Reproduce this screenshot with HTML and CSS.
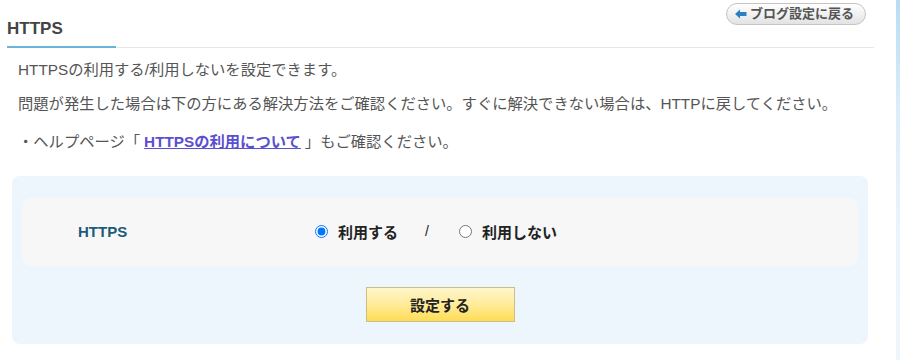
FILE: index.html
```html
<!DOCTYPE html>
<html lang="ja">
<head>
<meta charset="utf-8">
<title>HTTPS</title>
<link rel="stylesheet" href="styles.css">
</head>
<body>
<div class="page">
  <div class="main">
    <div class="header">
      <h2 class="title">HTTPS</h2>
      <a class="back-btn" href="#">
        <svg class="back-icon" width="12" height="10" viewBox="0 0 12 10"><path d="M0 5 L5 0.5 L5 3 L11.5 3 L11.5 7 L5 7 L5 9.5 Z" fill="#2a80c4"/></svg>
        <span>ブログ設定に戻る</span>
      </a>
    </div>
    <p class="intro first">HTTPSの利用する/利用しないを設定できます。</p>
    <p class="intro">問題が発生した場合は下の方にある解決方法をご確認ください。すぐに解決できない場合は、HTTPに戻してください。</p>
    <p class="intro help">・ヘルプページ「<a class="help-link" href="#">HTTPSの利用について</a>」もご確認ください。</p>
    <form class="settings-box">
      <div class="setting-row">
        <div class="setting-label">HTTPS</div>
        <div class="setting-options">
          <label class="option"><input type="radio" name="https" checked><span>利用する</span></label>
          <span class="sep">/</span>
          <label class="option"><input type="radio" name="https"><span>利用しない</span></label>
        </div>
      </div>
      <div class="actions">
        <button type="button" class="submit-btn">設定する</button>
      </div>
    </form>
  </div>
  <div class="side-strip"></div>
</div>
</body>
</html>
```

FILE: styles.css
```css
* { box-sizing: border-box; }
html, body {
  margin: 0;
  padding: 0;
  background: #fff;
}
body {
  font-family: "Liberation Sans", "Noto Sans CJK JP", sans-serif;
  color: #555;
  width: 900px;
  height: 360px;
  overflow: hidden;
}
.page {
  display: flex;
  height: 360px;
}
.main {
  flex: none;
  width: 867px;
  margin-left: 7px;
}
.side-strip {
  flex: none;
  width: 4px;
  margin-left: auto;
  background: linear-gradient(#b9dcf3, #dcedf9 30%, #ecf5fc 70%, #eef6fc);
}
.header {
  display: flex;
  justify-content: space-between;
  align-items: flex-start;
  border-bottom: 1px solid #e6e6e6;
}
.title {
  margin: 0 0 -1px 0;
  width: 109px;
  padding: 19px 0 7px 0;
  font-size: 17px;
  line-height: 20px;
  font-weight: bold;
  color: #444;
  border-bottom: 2px solid #6ab3d9;
}
.back-btn {
  display: flex;
  align-items: center;
  gap: 3px;
  margin: 3px 8px 0 0;
  width: 140px;
  height: 22px;
  padding-left: 8px;
  border: 1px solid #c4c4c4;
  border-radius: 11px;
  background: linear-gradient(#ffffff, #f1f1f1 50%, #e2e2e2);
  text-decoration: none;
  color: #555;
  font-size: 13px;
  font-weight: bold;
  line-height: 20px;
}
.back-icon { flex: none; }
.intro {
  margin: 14px 0 0 11px;
  font-size: 15.3px;
  line-height: 20px;
  color: #555;
}
.intro.first {
  margin-top: 12px;
}
.intro.help {
  margin-top: 18px;
}
.help-link {
  color: #5b4fd0;
  font-weight: bold;
  text-decoration: underline;
  margin: 0 4px;
}
.settings-box {
  margin: 24px 0 0 5px;
  width: 856px;
  height: 168px;
  padding: 22px 10px 0 10px;
  background: #edf5fd;
  border-radius: 8px;
}
.setting-row {
  display: flex;
  align-items: center;
  height: 68px;
  padding: 0 0 2px 56px;
  background: #f7f7f7;
  border-radius: 8px;
}
.setting-label {
  width: 237px;
  font-size: 15px;
  font-weight: bold;
  color: #1f5a7c;
}
.setting-options {
  display: flex;
  align-items: center;
  font-size: 15px;
  font-weight: bold;
  color: #222;
}
.option {
  display: flex;
  align-items: center;
}
.option input {
  margin: 0 10px 0 0;
  width: 13px;
  height: 13px;
}
.sep {
  margin: 0 30px 0 27px;
  font-weight: normal;
  font-size: 14px;
}
.actions {
  display: flex;
  justify-content: center;
  margin-top: 21px;
}
.submit-btn {
  width: 149px;
  height: 35px;
  border: 1px solid #cdbf84;
  background: linear-gradient(#fff7cc, #ffeb9a 50%, #ffdc55);
  font-family: "Liberation Sans", "Noto Sans CJK JP", sans-serif;
  font-size: 15px;
  font-weight: bold;
  color: #222;
  padding: 0;
}
```
